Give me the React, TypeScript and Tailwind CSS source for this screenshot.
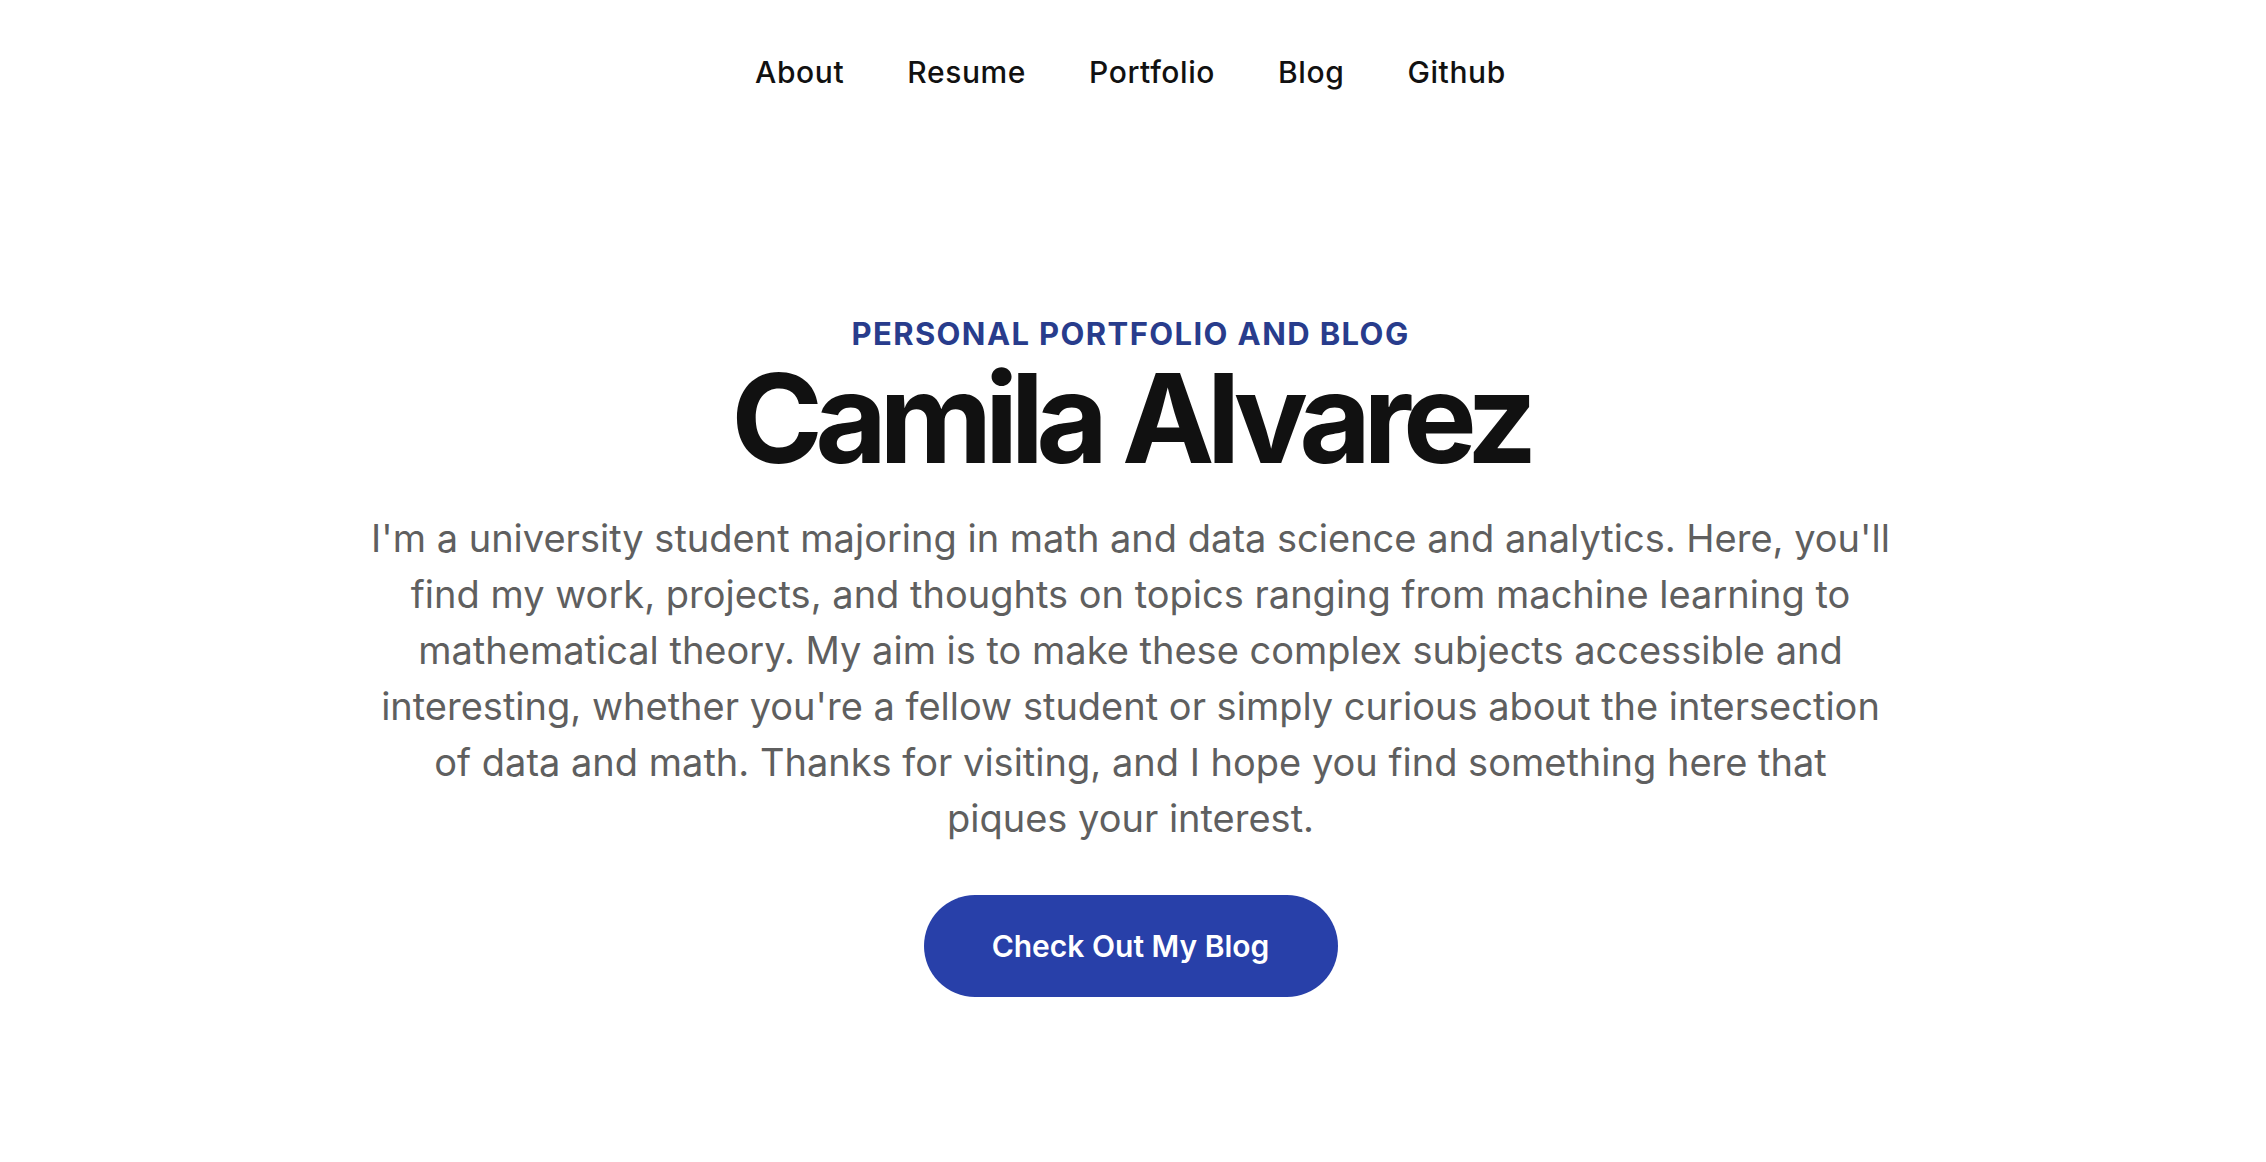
export default function App() {
  const links = ["About", "Resume", "Portfolio", "Blog", "Github"];
  return (
    <div className="min-h-[1162px] w-full bg-white pr-[5px]" style={{ fontFamily: "Inter, 'Noto Sans', sans-serif" }}>
      <nav className="flex h-[144px] items-center justify-center gap-[63px] text-[30px] font-medium tracking-[0.02em] text-[#111111]">
        {links.map((l) => (
          <a key={l} href="#" className="leading-[40px]">
            {l}
          </a>
        ))}
      </nav>
      <main className="flex flex-col items-center text-center">
        <div className="mt-[172px] text-[31px] font-bold uppercase leading-[36px] tracking-[0.045em] text-[#283c8c]">
          Personal Portfolio and Blog
        </div>
        <h1 className="mt-[11px] text-[124px] font-bold leading-[110px] tracking-[-0.063em] text-[#111111]">
          Camila Alvarez
        </h1>
        <p className="mt-[37px] w-[1540px] text-[38px] leading-[56px] text-[#5f5f5f]">
          I'm a university student majoring in math and data science and analytics. Here, you'll find my work, projects, and thoughts on topics ranging from machine learning to mathematical theory. My aim is to make these complex subjects accessible and interesting, whether you're a fellow student or simply curious about the intersection of data and math. Thanks for visiting, and I hope you find something here that
          <br />
          piques your interest.
        </p>
        <a
          href="#"
          className="mt-[49px] flex h-[102px] w-[414px] items-center justify-center rounded-full bg-[#2840a9] text-[30px] font-semibold text-white"
        >
          Check Out My Blog
        </a>
      </main>
    </div>
  );
}
